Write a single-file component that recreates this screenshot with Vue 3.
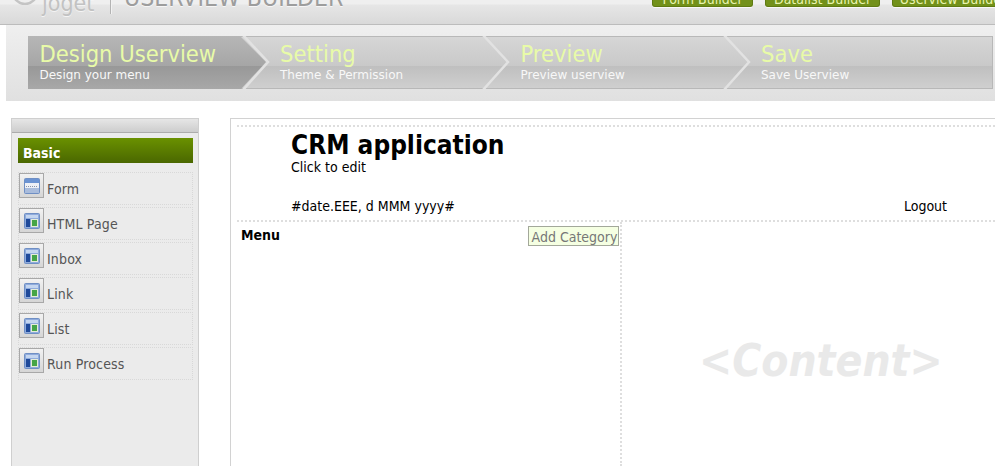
<script setup>
const steps = [
  { title: 'Design Userview', sub: 'Design your menu', active: true },
  { title: 'Setting', sub: 'Theme & Permission' },
  { title: 'Preview', sub: 'Preview userview' },
  { title: 'Save', sub: 'Save Userview', last: true }
]
const items = [
  { name: 'Form', kind: 'form' },
  { name: 'HTML Page', kind: 'page' },
  { name: 'Inbox', kind: 'page' },
  { name: 'Link', kind: 'page' },
  { name: 'List', kind: 'page' },
  { name: 'Run Process', kind: 'page' }
]
const builders = [
  { name: 'Form Builder', cls: 'b1' },
  { name: 'Datalist Builder', cls: 'b2' },
  { name: 'Userview Builder', cls: 'b3' }
]
</script>

<template>
  <div class="page">
    <header class="top">
      <div class="brand">
        <svg class="logo-ring" width="26" height="5" viewBox="0 0 26 5">
          <path d="M1 -8 a12 12 0 0 0 24 0" fill="none" stroke="#c4c4c4" stroke-width="2.5" />
        </svg>
        <span class="joget">joget</span>
        <span class="divider"></span>
        <span class="product">USERVIEW BUILDER</span>
      </div>
      <nav class="builders">
        <span v-for="b in builders" :key="b.name" class="builder" :class="b.cls">{{ b.name }}</span>
      </nav>
    </header>

    <section class="panel">
      <div class="steps">
        <div v-for="s in steps" :key="s.title" class="step">
          <div v-if="s.active" class="step-active"></div>
          <div class="step-text">
            <div class="step-title">{{ s.title }}</div>
            <div class="step-sub">{{ s.sub }}</div>
          </div>
          <svg v-if="!s.last" class="chev" width="30" height="53" viewBox="0 0 30 53">
            <path d="M2 -1 L27 26 L2 54" fill="none" stroke="#e2e2e2" stroke-width="2.5" />
          </svg>
        </div>
      </div>
    </section>

    <main class="work">
      <aside class="side">
        <div class="side-head"></div>
        <div class="side-body">
          <div class="group">Basic</div>
          <div v-for="it in items" :key="it.name" class="item">
            <span class="ico">
              <svg width="16" height="16" viewBox="0 0 16 16">
                <rect x="0" y="0" width="16" height="16" rx="2" fill="#6f8fc4" />
                <template v-if="it.kind === 'form'">
                  <rect x="1" y="1" width="14" height="4" fill="#6b93d2" />
                  <rect x="1" y="5" width="14" height="5" fill="#eef0f6" />
                  <path d="M2 8.5 H14" stroke="#8a94a8" stroke-width="1" stroke-dasharray="1 1" />
                  <rect x="1" y="10" width="14" height="5" fill="#a9bcdc" />
                </template>
                <template v-else>
                  <rect x="1" y="1" width="14" height="14" fill="#8fabdc" />
                  <rect x="2" y="2" width="12" height="3" fill="#c4d6f0" />
                  <rect x="2" y="6" width="4" height="8" fill="#1f4a9a" />
                  <rect x="7" y="6" width="7" height="8" fill="#e4ecd8" />
                  <rect x="8" y="7" width="5" height="6" fill="#45a548" />
                </template>
              </svg>
            </span>
            <span class="item-name">{{ it.name }}</span>
          </div>
        </div>
      </aside>

      <section class="canvas">
        <div class="head">
          <div class="app-title">CRM application</div>
          <div class="app-sub">Click to edit</div>
          <div class="meta">
            <span>#date.EEE, d MMM yyyy#</span>
            <span>Logout</span>
          </div>
        </div>
        <div class="body">
          <div class="menu">
            <span class="menu-label">Menu</span>
            <button class="add">Add Category</button>
          </div>
          <div class="content">&lt;Content&gt;</div>
        </div>
      </section>
    </main>
  </div>
</template>

<style>
html, body { margin: 0; background: #fff; overflow: hidden; }
</style>

<style scoped>
.page {
  width: 995px;
  height: 466px;
  overflow: hidden;
  background: #fff;
  font-family: "DejaVu Sans", sans-serif;
  font-stretch: condensed;
  font-size: 14px;
}
.top {
  height: 24px;
  box-sizing: content-box;
  border-bottom: 1px solid #bcbcbc;
  background: linear-gradient(#efefef 0, #efefef 4px, #e6e6e6 5px, #d9d9d9 100%);
  position: relative;
  overflow: hidden;
}
.brand {
  position: absolute;
  left: 0;
  top: -15px;
  display: flex;
  align-items: flex-start;
  height: 40px;
}
.logo-ring { margin: 15px 0 0 12px; flex: none; }
.joget {
  margin: 6px 0 0 4px;
  width: 68px;
  font-size: 23px;
  line-height: 24px;
  color: #c2c2c2;
  text-shadow: 0 1px 0 #f4f4f4;
}
.divider {
  width: 1px;
  height: 14px;
  margin: 15px 13px 0 0;
  background: #b4b4b4;
  box-shadow: 1px 0 0 #f2f2f2;
}
.product {
  font-size: 24.6px;
  line-height: 24px;
  margin-top: 1px;
  color: #9d9d9d;
  white-space: nowrap;
  text-shadow: 0 1px 0 #f6f6f6;
}
.builders { position: absolute; top: -17px; left: 0; right: 0; }
.builder {
  position: absolute;
  top: 0;
  height: 24px;
  line-height: 20px;
  padding-top: 6px;
  box-sizing: border-box;
  text-align: center;
  font-size: 14px;
  color: #e9f5b0;
  background: #72911a;
  border: 1px solid #5f7a12;
  border-top: 0;
  border-radius: 0 0 3px 3px;
  box-shadow: 0 1px 0 #f8f8f8;
  white-space: nowrap;
  overflow: hidden;
}
.b1 { left: 652px; width: 101px; }
.b2 { left: 765px; width: 115px; }
.b3 { left: 892px; width: 122px; }

.panel {
  margin-left: 6px;
  height: 76px;
  box-sizing: border-box;
  padding: 11px 2px 0 22px;
  background: linear-gradient(#efefef, #e0e0e0);
}
.steps {
  display: flex;
  height: 53px;
  box-sizing: border-box;
  border: 1px solid #b8b8b8;
  background: linear-gradient(#d6d6d6 0, #c9c9c9 56%, #bfbfbf 57%, #cfcfcf 100%);
}
.step {
  flex: 0 0 240.5px;
  position: relative;
  min-width: 0;
}
.step:last-child { flex: 1; }
.step-active {
  position: absolute;
  left: -1px;
  top: -1px;
  width: 240px;
  height: 53px;
  background: linear-gradient(#b6b6b6 0, #a6a6a6 56%, #989898 57%, #a8a8a8 100%);
  clip-path: polygon(0 0, 212px 0, 238px 26px, 213px 53px, 0 53px);
}
.step-text { position: relative; padding-left: 10.5px; }
.step-title {
  font-size: 23.5px;
  line-height: 28px;
  height: 27px;
  margin-top: 3px;
  color: #e8fba8;
  white-space: nowrap;
}
.step-sub {
  font-size: 12px;
  font-stretch: normal;
  line-height: 16px;
  color: #f8f8f8;
  white-space: nowrap;
}
.chev { position: absolute; top: -1px; right: -1px; }

.work {
  display: flex;
  gap: 31px;
  margin-top: 17px;
  margin-left: 11px;
  height: 348px;
}
.side {
  width: 188px;
  flex: none;
  box-sizing: border-box;
  border: 1px solid #cfcfcf;
  border-bottom: 0;
  background: #ebebeb;
}
.side-head {
  height: 13px;
  background: linear-gradient(#e6e6e6, #cdcdcd);
  border-bottom: 1px solid #acacac;
}
.side-body { padding: 5px 5px 0 6px; }
.group {
  height: 25px;
  line-height: 31px;
  padding-left: 5px;
  font-weight: 700;
  color: #fff;
  background: linear-gradient(#6a9100, #4a6700);
  margin-bottom: 9px;
}
.item {
  height: 33px;
  box-sizing: border-box;
  border: 1px dotted #d8d8d8;
  display: flex;
  align-items: flex-start;
  margin-bottom: 2px;
}
.ico {
  width: 25px;
  height: 25px;
  box-sizing: border-box;
  border: 1px solid #a8a8a8;
  background: linear-gradient(#f2f2f2, #d6d6d6);
  display: flex;
  align-items: center;
  justify-content: center;
  flex: none;
}
.item-name {
  margin-left: 3px;
  margin-top: 7px;
  line-height: 18px;
  letter-spacing: 0.15px;
  color: #555;
}

.canvas {
  flex: 1;
  min-width: 0;
  box-sizing: border-box;
  border: 1px solid #d2d2d2;
  border-right: 0;
  border-bottom: 0;
  padding: 6px 0 0 6px;
  display: flex;
  flex-direction: column;
}
.head {
  height: 97px;
  box-sizing: border-box;
  border-top: 2px dotted #dedede;
  border-bottom: 2px dotted #dedede;
  padding: 3px 48px 0 54px;
  color: #000;
  display: flex;
  flex-direction: column;
}
.app-title {
  font-size: 26px;
  font-weight: 700;
  line-height: 30px;
}
.app-sub { line-height: 16px; margin-top: -1px; }
.meta {
  margin-top: 23px;
  display: flex;
  justify-content: space-between;
  line-height: 16px;
}
.body { flex: 1; display: flex; }
.menu {
  width: 385px;
  flex: none;
  box-sizing: border-box;
  border-right: 2px dotted #dedede;
  padding: 4px 1px 0 4px;
  display: flex;
  justify-content: space-between;
  align-items: flex-start;
}
.menu-label { font-weight: 700; line-height: 16px; margin-top: 1px; color: #000; }
.add {
  font: inherit;
  font-stretch: condensed;
  height: 20px;
  width: 91px;
  padding: 1px 0 0 2px;
  color: #777;
  background: #f5ffe2;
  border: 1px solid #a3a89a;
  white-space: nowrap;
}
.content {
  flex: 1;
  padding: 115px 0 0 77px;
  font-size: 44px;
  line-height: 48px;
  font-weight: 700;
  font-style: italic;
  color: #e9e9e9;
  white-space: nowrap;
}
</style>
